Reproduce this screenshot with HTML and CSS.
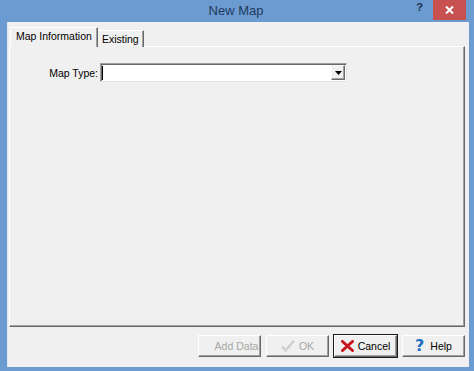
FILE: index.html
```html
<!DOCTYPE html>
<html>
<head>
<meta charset="utf-8">
<link rel="stylesheet" href="styles.css">
</head>
<body>
<div class="window">
  <div class="titlebar">
    <div></div>
    <div class="title">New Map</div>
    <div class="caption">
      <span class="cap-help">?</span>
      <span class="cap-close"><svg width="9" height="8" viewBox="0 0 9 8"><path d="M1 0.5 L8 7.5 M8 0.5 L1 7.5" stroke="#fff" stroke-width="2"/></svg></span>
    </div>
  </div>
  <div class="client">
    <div class="tabs">
      <div class="tab active">Map Information</div>
      <div class="tab">Existing</div>
    </div>
    <div class="panel">
      <div class="field">
        <span class="label">Map Type:</span>
        <div class="combo">
          <div class="combo-input"><span class="caret"></span></div>
          <div class="combo-btn"><svg width="7" height="4" viewBox="0 0 7 4"><path d="M0 0 H7 L3.5 4 Z" fill="#000"/></svg></div>
        </div>
      </div>
    </div>
    <div class="buttons">
      <div class="btn disabled"><span class="btn-text right">Add Data</span></div>
      <div class="btn disabled">
        <svg class="ico" width="14" height="13" viewBox="0 0 14 13"><path d="M1 7.5 L4.5 11.5 L13 1.5 L12 1 L4.5 9.5 L2 6.5 Z" fill="none" stroke="#b4b4b4" stroke-width="0.9" stroke-linejoin="round"/></svg>
        <span class="btn-text">OK</span>
      </div>
      <div class="btn default">
        <svg class="ico" width="13" height="12" viewBox="0 0 13 12"><path d="M1.5 1.5 L11.5 10.5 M11.5 1.5 L1.5 10.5" stroke="#c8141a" stroke-width="3" stroke-linecap="round"/></svg>
        <span class="btn-text">Cancel</span>
      </div>
      <div class="btn">
        <span class="q-ico">?</span>
        <span class="btn-text">Help</span>
      </div>
    </div>
  </div>
</div>
</body>
</html>
```

FILE: styles.css
```css
html, body {
  margin: 0;
  padding: 0;
}
body {
  width: 474px;
  height: 371px;
  overflow: hidden;
  font-family: "Liberation Sans", Arial, sans-serif;
  font-size: 10.5px;
  color: #000;
}
.window {
  width: 474px;
  height: 371px;
  background: #6b9bd1;
  display: flex;
  flex-direction: column;
  box-sizing: border-box;
}
.titlebar {
  height: 22px;
  display: grid;
  grid-template-columns: 1fr auto 1fr;
  align-items: start;
}
.title {
  font-size: 13px;
  color: #1f3a5c;
  line-height: 21px;
  padding-right: 2px;
}
.caption {
  justify-self: end;
  display: flex;
  align-items: flex-start;
  margin-right: 8px;
}
.cap-help {
  font-weight: bold;
  font-size: 11px;
  color: #1b2f4a;
  line-height: 14px;
  margin-right: 10px;
}
.cap-close {
  width: 33px;
  height: 20px;
  background: #c75050;
  display: flex;
  align-items: center;
  justify-content: center;
}
.client {
  flex: 1;
  margin: 0 5px 4px 7px;
  background: #f0f0f0;
  display: flex;
  flex-direction: column;
  padding: 6px 4px 10px 1px;
  border-left: 1px solid #dfe9f5;
  box-sizing: border-box;
}
.tabs {
  display: flex;
  align-items: flex-end;
  padding-left: 1px;
  height: 19px;
  position: relative;
  z-index: 1;
  margin-bottom: -1px;
}
.tab {
  white-space: nowrap;
  padding: 0 4px 0 4px;
  border-top: 1px solid #fff;
  border-right: 1px solid #696969;
  box-shadow: inset -1px 0 #a0a0a0;
  background: #f0f0f0;
  box-sizing: border-box;
  height: 17px;
  line-height: 16px;
}
.tab.active {
  height: 20px;
  padding: 0 5px 0 5px;
  border-left: 1px solid #fff;
  line-height: 17px;
}
.panel {
  flex: 1;
  border-top: 1px solid #fff;
  border-left: 1px solid #fff;
  border-right: 1px solid #696969;
  border-bottom: 1px solid #696969;
  box-shadow: inset -1px -1px #a0a0a0;
  padding-top: 16px;
}
.field {
  display: flex;
  align-items: center;
}
.label {
  width: 88px;
  text-align: right;
  padding-right: 2px;
}
.combo {
  width: 247px;
  height: 19px;
  display: flex;
  background: #fff;
  border-top: 1px solid #a0a0a0;
  border-left: 1px solid #a0a0a0;
  border-right: 1px solid #e3e3e3;
  border-bottom: 1px solid #e3e3e3;
  box-shadow: inset 1px 1px #696969;
  box-sizing: border-box;
  padding: 1px;
}
.combo-input {
  flex: 1;
  display: flex;
  align-items: center;
  padding-left: 0;
}
.caret {
  width: 1px;
  height: 14px;
  background: #000;
}
.combo-btn {
  width: 14px;
  background: #f0f0f0;
  border-top: 1px solid #f8f8f8;
  border-left: 1px solid #f8f8f8;
  border-right: 1px solid #696969;
  border-bottom: 1px solid #696969;
  box-shadow: inset -1px -1px #a0a0a0;
  display: flex;
  align-items: center;
  justify-content: center;
  box-sizing: border-box;
}
.buttons {
  display: flex;
  justify-content: flex-end;
  gap: 5px;
  margin-top: 8px;
}
.btn {
  width: 63px;
  height: 22px;
  box-sizing: border-box;
  background: #f0f0f0;
  border-top: 1px solid #fff;
  border-left: 1px solid #fff;
  border-right: 1px solid #696969;
  border-bottom: 1px solid #696969;
  box-shadow: inset -1px -1px #a0a0a0;
  display: flex;
  align-items: center;
  justify-content: center;
  gap: 4px;
}
.btn.disabled {
  color: #a6a6a6;
}
.btn.default {
  outline: 1px solid #1a1a1a;
  outline-offset: 0;
}
.btn-text.right {
  margin-left: 14px;
}
.ico {
  display: block;
}
.q-ico {
  font-family: "DejaVu Sans", sans-serif;
  font-weight: bold;
  font-size: 16px;
  color: #1f6fc2;
  line-height: 16px;
  margin-right: 2px;
}
```
